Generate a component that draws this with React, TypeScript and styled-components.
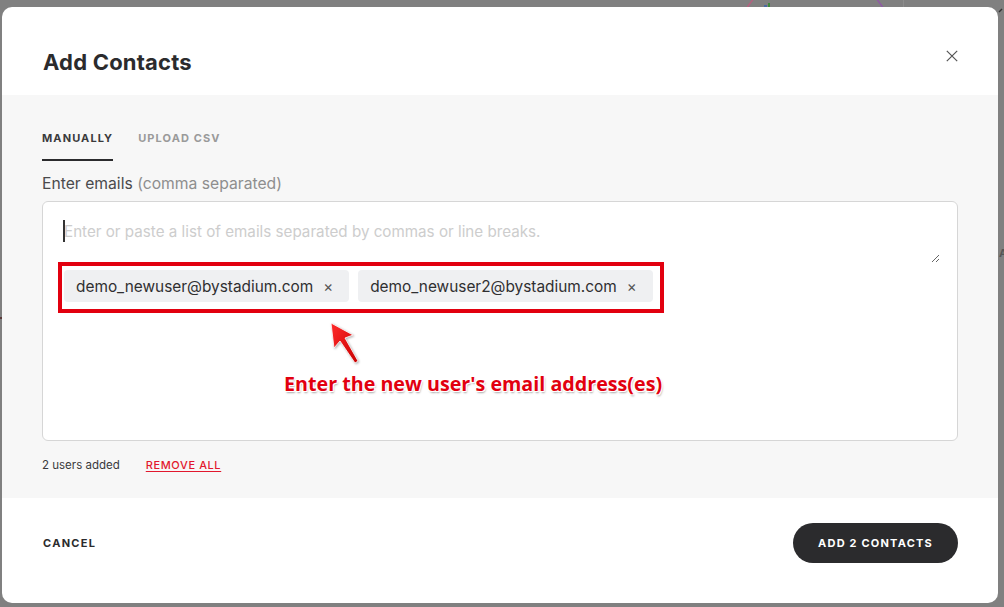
import React from "react";
import styled, { createGlobalStyle } from "styled-components";

const GlobalStyle = createGlobalStyle`
  html, body { margin: 0; padding: 0; }
  body {
    background: #808080;
    font-family: Inter, "Noto Sans", "Liberation Sans", sans-serif;
    color: #2b2b2d;
    -webkit-font-smoothing: antialiased;
  }
  * { box-sizing: border-box; }
`;

const Backdrop = styled.div`
  position: relative;
  width: 1004px;
  height: 607px;
  overflow: hidden;
  padding: 7px 6px 4px 2px;
  background: #808080;
`;

const BackdropArt = styled.svg`
  position: absolute;
  left: 0;
  top: 0;
  width: 1004px;
  height: 607px;
`;

const Modal = styled.div`
  position: relative;
  width: 996px;
  height: 596px;
  background: #fff;
  border-radius: 10px;
  overflow: hidden;
  display: flex;
  flex-direction: column;
`;

const Header = styled.header`
  height: 88px;
  flex: none;
  display: flex;
  align-items: flex-start;
  justify-content: space-between;
  padding: 40px 36px 0 41px;
`;

const Title = styled.h1`
  margin: 0;
  font-size: 22px;
  line-height: 30px;
  font-weight: 700;
  letter-spacing: 0.2px;
  color: #2b2b2d;
`;

const CloseButton = styled.button`
  width: 20px;
  height: 20px;
  margin-top: -1px;
  padding: 0;
  border: 0;
  background: transparent;
  display: flex;
  align-items: center;
  justify-content: center;
  cursor: pointer;
`;

const Body = styled.section`
  flex: 1;
  background: #f7f7f7;
  padding: 33px 40px 0 40px;
  display: flex;
  flex-direction: column;
`;

const Tabs = styled.div`
  display: flex;
  gap: 25px;
`;

const Tab = styled.button<{ $active?: boolean }>`
  padding: 0 0 11px;
  border: 0;
  border-bottom: 2px solid ${(p) => (p.$active ? "#2b2b2d" : "transparent")};
  background: transparent;
  font-family: inherit;
  font-size: 11px;
  line-height: 20px;
  font-weight: 700;
  letter-spacing: 1.1px;
  color: ${(p) => (p.$active ? "#3a3a3c" : "#9a9a9a")};
  cursor: pointer;
`;

const Label = styled.label`
  margin-top: 13px;
  font-size: 15.7px;
  line-height: 20px;
  color: #4a4a4c;
`;

const Hint = styled.span`
  color: #8e8e8e;
`;

const Box = styled.div`
  position: relative;
  margin-top: 7px;
  height: 240px;
  background: #fff;
  border: 1px solid #d6d6d6;
  border-radius: 6px;
  padding: 18px 17px 0 20px;
  display: flex;
  flex-direction: column;
  align-items: flex-start;
`;

const Input = styled.textarea`
  width: 100%;
  height: 43px;
  min-height: 30px;
  padding: 1px 0 0 1px;
  border: 0;
  outline: none;
  resize: vertical;
  font-family: inherit;
  font-size: 15.2px;
  line-height: 22px;
  color: #2b2b2d;
  background: transparent;
  &::placeholder { color: #cdcdcd; }
`;

const Caret = styled.span`
  position: absolute;
  left: 20px;
  top: 18px;
  width: 2px;
  height: 22px;
  background: #333;
`;

const Highlight = styled.div`
  margin: -1px 0 0 -5px;
  display: inline-flex;
  gap: 9px;
  border: 4px solid #e2000f;
  padding: 4px 7px 7px 2px;
`;

const Chip = styled.span`
  height: 32px;
  display: inline-flex;
  align-items: center;
  padding: 0 16px 0 12px;
  background: #eff0f2;
  border-radius: 4px;
  font-size: 15.4px;
  color: #2f2f31;
  white-space: nowrap;
`;

const ChipRemove = styled.span`
  margin-left: 10px;
  font-size: 15px;
  color: #555;
`;

const Note = styled.div`
  position: absolute;
  left: 241px;
  top: 170px;
  font-family: "Open Sans", "Liberation Sans", sans-serif;
  font-weight: 700;
  font-size: 19.7px;
  line-height: 24px;
  color: #e2000f;
  white-space: nowrap;
  text-shadow:
    -1px -1px 0 #fff, 1px -1px 0 #fff, -1px 1px 0 #fff, 1px 1px 0 #fff,
    1px 2px 2px rgba(0, 0, 0, 0.35);
`;

const Arrow = styled.svg`
  position: absolute;
  left: 283px;
  top: 116px;
  overflow: visible;
`;

const Stats = styled.div`
  margin-top: 16px;
  display: flex;
  align-items: center;
  gap: 26px;
  font-size: 11.5px;
  line-height: 16px;
  color: #3a3a3c;
`;

const RemoveAll = styled.button`
  padding: 0;
  border: 0;
  background: transparent;
  font-family: inherit;
  font-size: 11px;
  font-weight: 500;
  letter-spacing: 0.6px;
  color: #e2182d;
  text-decoration: underline;
  text-underline-offset: 2px;
  cursor: pointer;
`;

const Footer = styled.footer`
  height: 105px;
  flex: none;
  display: flex;
  align-items: flex-start;
  justify-content: space-between;
  padding: 25px 40px 0 41px;
`;

const CancelButton = styled.button`
  height: 40px;
  padding: 0;
  border: 0;
  background: transparent;
  font-family: inherit;
  font-size: 11px;
  font-weight: 700;
  letter-spacing: 1.3px;
  color: #2b2b2d;
  cursor: pointer;
`;

const PrimaryButton = styled.button`
  width: 165px;
  height: 40px;
  border: 0;
  border-radius: 20px;
  background: #2b2b2d;
  color: #fff;
  font-family: inherit;
  font-size: 11px;
  font-weight: 700;
  letter-spacing: 1.2px;
  cursor: pointer;
`;

const emails = ["demo_newuser@bystadium.com", "demo_newuser2@bystadium.com"];

export default function App() {
  return (
    <>
      <GlobalStyle />
      <Backdrop>
        <BackdropArt viewBox="0 0 1004 607">
          <defs>
            <linearGradient id="ring" x1="0" x2="1" y1="0" y2="0">
              <stop offset="0" stopColor="#b8607a" />
              <stop offset="1" stopColor="#8a58a8" />
            </linearGradient>
          </defs>
          <circle cx="815" cy="50" r="80" fill="none" stroke="url(#ring)" strokeWidth="1.5" />
          <rect x="768" y="3" width="2" height="5" fill="#3c8a3c" />
          <rect x="764" y="5" width="3" height="3" fill="#4a6aa0" />
          <line x1="903.5" y1="0" x2="903.5" y2="8" stroke="#8c8c8c" />
          <path d="M999 12 L1002 9" stroke="#333" strokeWidth="1.5" />
          <text x="999" y="257" fontSize="11" fontFamily="Inter, sans-serif" fontWeight="700" fill="#555">A</text>
          <rect x="0" y="317" width="2" height="2" fill="#5a3a3a" />
        </BackdropArt>
        <Modal>
          <Header>
            <Title>Add Contacts</Title>
            <CloseButton aria-label="Close">
              <svg width="12" height="12" viewBox="0 0 12 12">
                <path d="M0.8 0.8 L11.2 11.2 M11.2 0.8 L0.8 11.2" stroke="#555" strokeWidth="1.2" />
              </svg>
            </CloseButton>
          </Header>
          <Body>
            <Tabs>
              <Tab $active>MANUALLY</Tab>
              <Tab>UPLOAD CSV</Tab>
            </Tabs>
            <Label>
              Enter emails <Hint>(comma separated)</Hint>
            </Label>
            <Box>
              <Input placeholder="Enter or paste a list of emails separated by commas or line breaks." />
              <Caret />
              <Highlight>
                {emails.map((e) => (
                  <Chip key={e}>
                    {e}
                    <ChipRemove>×</ChipRemove>
                  </Chip>
                ))}
              </Highlight>
              <Arrow width="30" height="46" viewBox="0 0 30 46">
                <defs>
                  <linearGradient id="arrowFill" x1="0" x2="1" y1="0" y2="1">
                    <stop offset="0" stopColor="#ff2a2a" />
                    <stop offset="1" stopColor="#c80000" />
                  </linearGradient>
                </defs>
                <polygon
                  points="5,5 27,17 19,20 32,43 29,45 14,23 8,30"
                  fill="url(#arrowFill)"
                  stroke="#fff"
                  strokeWidth="0.8"
                  strokeLinejoin="round"
                  style={{ filter: "drop-shadow(1px 1px 1px rgba(0,0,0,0.3))" }}
                />
              </Arrow>
              <Note>Enter the new user's email address(es)</Note>
            </Box>
            <Stats>
              <span>2 users added</span>
              <RemoveAll>REMOVE ALL</RemoveAll>
            </Stats>
          </Body>
          <Footer>
            <CancelButton>CANCEL</CancelButton>
            <PrimaryButton>ADD 2 CONTACTS</PrimaryButton>
          </Footer>
        </Modal>
      </Backdrop>
    </>
  );
}
